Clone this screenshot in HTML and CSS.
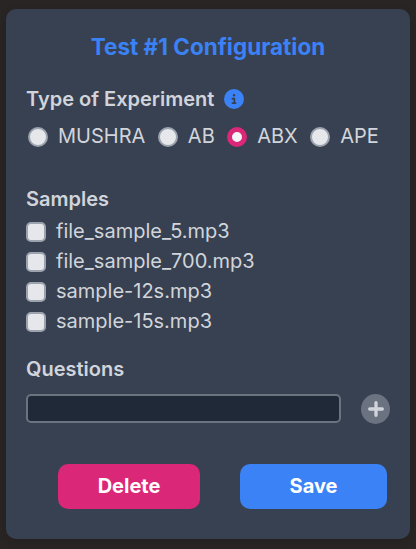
FILE: index.html
```html
<!DOCTYPE html>
<html lang="en">
<head>
<meta charset="utf-8">
<title>Test Configuration</title>
<link rel="stylesheet" href="styles.css">
</head>
<body>
<form class="card">
  <h1 class="title">Test #1 Configuration</h1>
  <h2 class="heading">Type of Experiment
    <svg class="info" viewBox="0 0 512 512"><path fill="currentColor" d="M256 512A256 256 0 1 0 256 0a256 256 0 1 0 0 512zM216 336h24V272H216c-13.300 0-24-10.700-24-24s10.700-24 24-24h48c13.300 0 24 10.700 24 24v88h8c13.300 0 24 10.700 24 24s-10.700 24-24 24H216c-13.300 0-24-10.700-24-24s10.700-24 24-24zm40-208a32 32 0 1 1 0 64 32 32 0 1 1 0-64z"/></svg>
  </h2>
  <div class="radios">
    <label class="option"><input class="radio" type="radio" name="type">MUSHRA</label>
    <label class="option"><input class="radio" type="radio" name="type">AB</label>
    <label class="option"><input class="radio" type="radio" name="type" checked>ABX</label>
    <label class="option"><input class="radio" type="radio" name="type">APE</label>
  </div>
  <h2 class="heading samples-heading">Samples</h2>
  <div class="samples">
    <label class="option"><input class="check" type="checkbox">file_sample_5.mp3</label>
    <label class="option"><input class="check" type="checkbox">file_sample_700.mp3</label>
    <label class="option"><input class="check" type="checkbox">sample-12s.mp3</label>
    <label class="option"><input class="check" type="checkbox">sample-15s.mp3</label>
  </div>
  <h2 class="heading questions-heading">Questions</h2>
  <div class="question-row">
    <input class="question" type="text">
    <button class="add" type="button"><svg class="plus" viewBox="0 0 16 16"><path d="M8 1.700v12.600M1.700 8h12.600" stroke="currentColor" stroke-width="3.300" stroke-linecap="round"/></svg></button>
  </div>
  <div class="actions">
    <button class="button delete" type="button">Delete</button>
    <button class="button save" type="button">Save</button>
  </div>
</form>
</body>
</html>
```
FILE: styles.css
```css
* { box-sizing: border-box; margin: 0; }
body {
  padding: 9px 6px 10px;
  background: #292524;
  font-family: Inter, "Liberation Sans", sans-serif;
  font-size: 20px;
  line-height: 30px;
  color: #d1d5db;
}
.card {
  height: 530px;
  padding: 23px 20px 30px;
  border-radius: 10px;
  background: #384151;
  box-shadow: 0 3px 8px rgba(0, 0, 0, .15);
}
.title {
  font-size: 22.5px;
  font-weight: 700;
  line-height: 30px;
  text-align: center;
  color: #3b82f6;
}
.heading {
  display: flex;
  align-items: center;
  gap: 10px;
  margin-top: 22px;
  font-size: 20px;
  font-weight: 600;
  line-height: 30px;
}
.info { width: 20px; height: 20px; color: #3b82f6; }
.radios { display: flex; gap: 12.5px; margin: 7px 0 0 2px; }
.option { display: flex; align-items: center; gap: 10px; height: 30px; }
.radio, .check {
  appearance: none;
  flex: none;
  width: 20px;
  height: 20px;
  margin: 2px 0 0;
  border: 2px solid #9ca3af;
  background: #e5e7eb;
}
.radio { border-radius: 50%; }
.radio:checked { border: 5px solid #db2777; background: #f3f4f6; }
.check { border-radius: 5px; }
.samples-heading { margin-top: 33px; }
.samples { margin-top: 2px; }
.questions-heading { margin-top: 18px; }
.question-row { display: flex; align-items: flex-start; gap: 20px; margin-top: 10px; }
.question {
  width: 315px;
  height: 29px;
  padding: 0 8px;
  border: 2px solid #6b7280;
  border-radius: 5px;
  background: #1f2937;
  color: inherit;
  font: inherit;
}
.add {
  display: flex;
  align-items: center;
  justify-content: center;
  width: 29px;
  height: 30px;
  padding: 0;
  border: 0;
  border-radius: 50%;
  background: #6b7280;
  color: #d1d5db;
}
.plus { width: 16px; height: 16px; }
.actions { display: flex; gap: 40px; margin: 40px 0 0 32px; }
.button {
  height: 45px;
  padding: 0 0 2px;
  border: 0;
  border-radius: 10px;
  color: #fff;
  font: 700 20px/30px Inter, "Liberation Sans", sans-serif;
}
.delete { width: 142px; background: #db2777; }
.save { width: 147px; background: #3b82f6; }
```
